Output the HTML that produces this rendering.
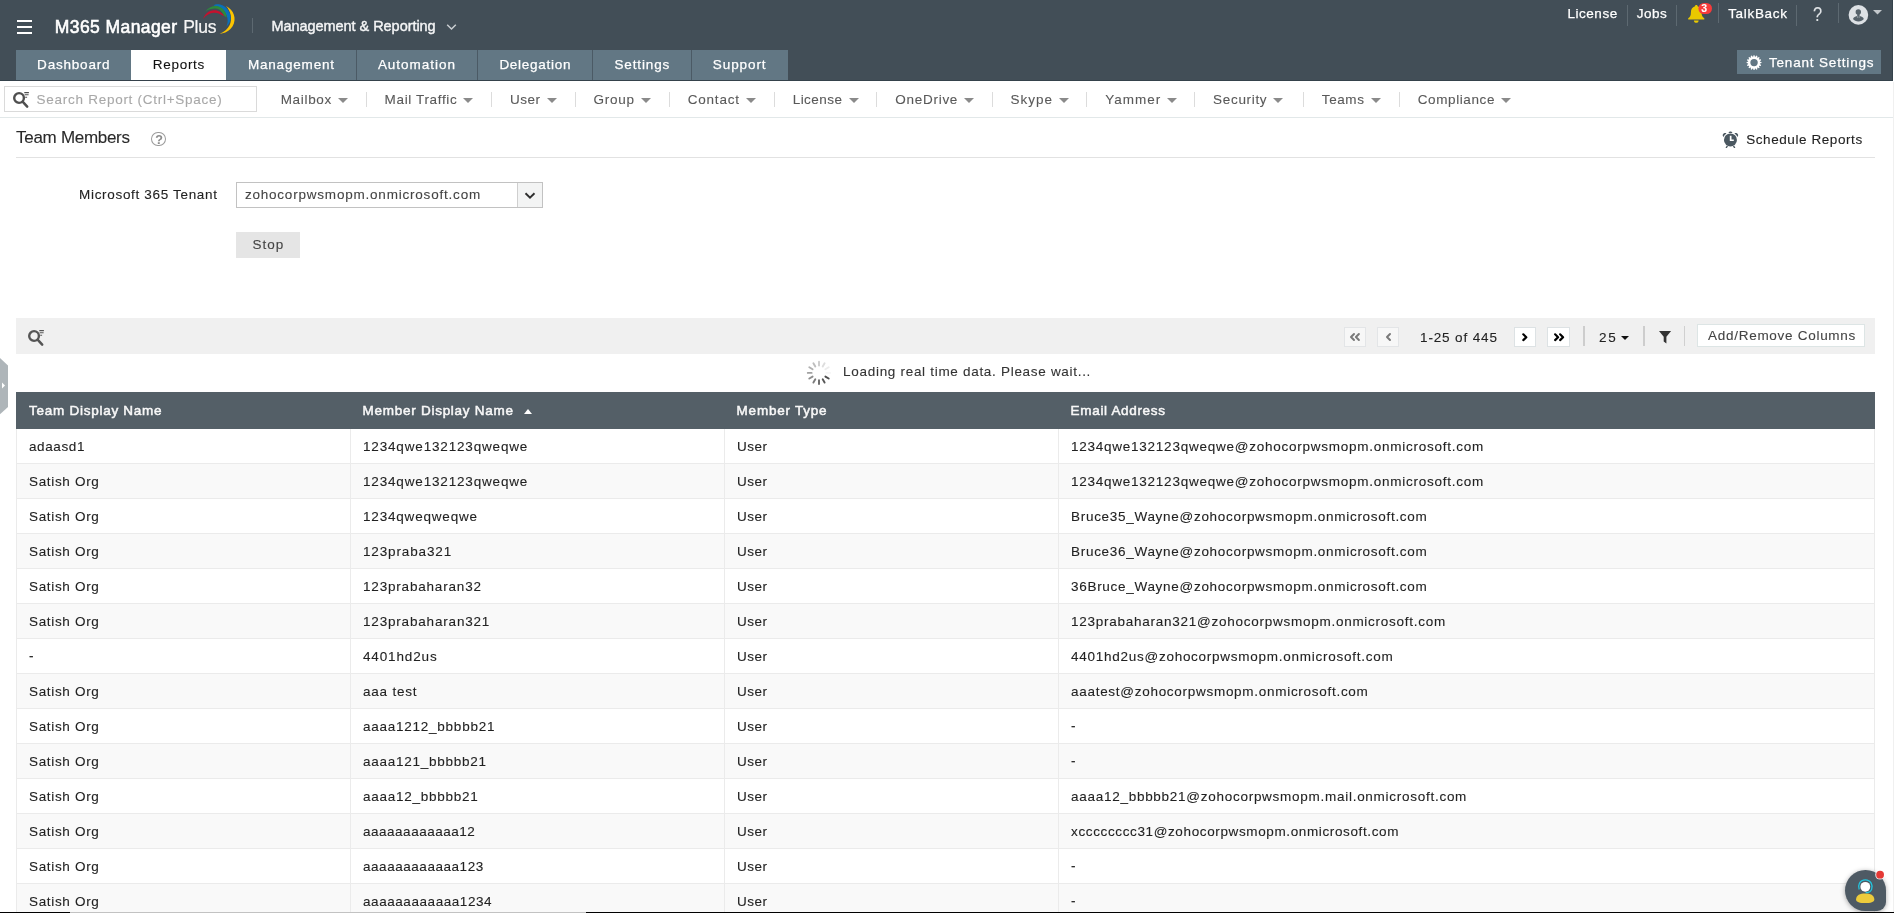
<!DOCTYPE html>
<html lang="en"><head><meta charset="utf-8"><title>M365 Manager Plus - Team Members</title>
<style>
*{box-sizing:border-box;margin:0;padding:0}
html,body{width:1894px;height:913px;overflow:hidden;background:#fff}
body{font-family:"Liberation Sans",sans-serif;font-size:13.5px;color:#222;-webkit-text-stroke-width:0.1px}
#app{position:absolute;left:0;top:0;width:1894px;height:913px;overflow:hidden;background:#fff;will-change:transform}
.t{position:absolute;white-space:nowrap;line-height:20px;height:20px}
.abs{position:absolute}
header{position:absolute;left:0;top:0;width:1893px;height:81px;background:#424e57;border-bottom:1px solid #35424b;border-right:1px solid #35424b}
.vsep{position:absolute;width:1px;background:#5d6971}
.tab{position:absolute;top:50px;height:30px;background:#627784}
.tab.sel{background:#fff}
.tdiv{position:absolute;top:50px;height:30px;width:1px;background:#4b5a65}
nav{position:absolute;left:0;top:81px;width:1893px;height:37px;background:#fff;border-bottom:1px solid #e2e8e9}
.msep{position:absolute;top:11px;width:1px;height:15px;background:#dcdcdc}
.caret{position:absolute;width:0;height:0;border-left:5px solid transparent;border-right:5px solid transparent;border-top:5px solid #8a8a8a}
table{border-collapse:separate;border-spacing:0;table-layout:fixed}
th{background:#545f67;color:#f8f8f8;height:37px;text-align:left;padding:0 0 0 13px;font-weight:400;-webkit-text-stroke:0.5px #f8f8f8;white-space:nowrap;vertical-align:top}
th span{display:inline-block;line-height:20px;margin-top:9px}
th+th{padding-left:12.6px}
td{height:35px;padding:0 0 0 12px;border-bottom:1px solid #ebebeb;border-left:1px solid #ebebeb;white-space:nowrap;vertical-align:top;color:#222}
td span{display:inline-block;line-height:20px;margin-top:8px}
tr.e td{background:#f9f9f9}
td:last-child{border-right:1px solid #ebebeb}
.pb{position:absolute;top:327px;height:20px;width:22px;border:1px solid #e3e5e7;background:#f7f7f7}
.pb.on{background:#fff;border-color:#dde2e4}
</style></head><body><div id="app">

<header>
<div class="abs" style="left:17px;top:20px;width:15px;height:2px;background:#fff"></div>
<div class="abs" style="left:17px;top:26px;width:15px;height:2px;background:#fff"></div>
<div class="abs" style="left:17px;top:32px;width:15px;height:2px;background:#fff"></div>
<span class="t" id="t0" style="left:54.80px;top:17.00px;font-size:17.5px;font-weight:400;color:#fff;letter-spacing:0.416px;-webkit-text-stroke:0.6px #fff">M365 Manager</span>
<span class="t" id="t1" style="left:183.20px;top:17.00px;font-size:17.5px;font-weight:400;color:#f6f6f6;letter-spacing:-0.282px;-webkit-text-stroke:0.2px #f6f6f6">Plus</span>
<svg class="abs" style="left:200px;top:0" width="40" height="40" viewBox="200 0 40 40">
<path d="M226 5.9C233.8 9.6 237 18.8 232.6 26.2C229.8 30.8 225 33.2 219.6 33.8C224.2 32 227.8 29 229.7 25C232.4 19 231 11.2 226 5.9Z" fill="#fcc400"/>
<path d="M213.3 5.5C215 4.3 217.6 4 220 4.6C226.6 6.3 231 12.4 230.6 18.6C230.4 21.6 228.8 24.6 226.3 26.8C227.6 24 228 21 227.4 18C226.3 12 220.8 6.2 213.3 5.5Z" fill="#0a71bb"/>
<path d="M205 11.7C208 8 212 6 216.2 6.1C221.6 6.3 226.2 10.8 226.9 17.5C225.6 17 224.6 16.4 223.7 15.6C222.4 11.4 219.2 8.7 215.4 8.6C211.6 8.5 208 9.8 205 11.7Z" fill="#2d8a3c"/>
<path d="M203.2 18.9C204.4 14.2 208.6 10.4 214 10.2C218.2 10 222 12.4 224.3 15.8C223.6 15.8 222.8 15.6 222 15.2C219.8 13.4 217 12.5 214 12.7C209.6 13 205.6 15.4 203.2 18.9Z" fill="#c5112e"/>
</svg>
<div class="vsep" style="left:252px;top:18px;height:15px"></div>
<span class="t" id="t2" style="left:271.40px;top:16.00px;font-size:14.5px;font-weight:400;color:#f4f5f6;letter-spacing:-0.045px;-webkit-text-stroke:0.4px #f4f5f6">Management &amp; Reporting</span>
<svg class="abs" style="left:445px;top:22px" width="13" height="10" viewBox="0 0 13 10"><path d="M2.2 2.8L6.5 7L10.8 2.8" fill="none" stroke="#c9ced2" stroke-width="1.5"/></svg>
<span class="t" id="t3" style="left:1567.50px;top:4.00px;font-size:13.5px;font-weight:400;color:#fff;letter-spacing:0.526px;-webkit-text-stroke:0.25px #fff">License</span>
<div class="vsep" style="left:1627px;top:5px;height:21px"></div>
<span class="t" id="t4" style="left:1636.70px;top:4.00px;font-size:13.5px;font-weight:400;color:#fff;letter-spacing:0.556px;-webkit-text-stroke:0.25px #fff">Jobs</span>
<div class="vsep" style="left:1676px;top:5px;height:21px"></div>
<svg class="abs" style="left:1686px;top:2px" width="30" height="24" viewBox="1686 2 30 24">
<path d="M1696.3 4.9C1697.3 4.9 1697.6 5.6 1697.6 6.2C1700.4 7 1701.6 9.4 1701.6 12.4C1701.6 15.2 1702.4 17 1704.3 18.3L1704.3 19.5L1688.2 19.5L1688.2 18.3C1690.2 17 1690.9 15.2 1690.9 12.4C1690.9 9.4 1692.2 7 1695 6.2C1695 5.6 1695.3 4.9 1696.3 4.9Z" fill="#e9c900"/>
<path d="M1693.9 20.4L1698.6 20.4C1698.6 21.8 1697.6 22.7 1696.25 22.7C1694.9 22.7 1693.9 21.8 1693.9 20.4Z" fill="#e9c900"/>
<rect x="1698.4" y="3" width="13.6" height="11" rx="5.5" fill="#f73b3b"/>
</svg>
<span class="t" id="t5" style="left:1701.30px;top:-2.00px;font-size:10.5px;font-weight:700;color:#fff;letter-spacing:1.456px;">3</span>
<div class="vsep" style="left:1718px;top:3px;height:20px"></div>
<span class="t" id="t6" style="left:1728.20px;top:4.00px;font-size:13.5px;font-weight:400;color:#fff;letter-spacing:0.681px;-webkit-text-stroke:0.25px #fff">TalkBack</span>
<div class="vsep" style="left:1796px;top:5px;height:21px"></div>
<span class="t" id="t7" style="left:1812.80px;top:4.00px;font-size:20px;font-weight:400;color:#dfe3e6;letter-spacing:-1.625px;transform:scaleX(.82);transform-origin:0 0">?</span>
<div class="vsep" style="left:1838px;top:3px;height:20px"></div>
<svg class="abs" style="left:1847px;top:3px" width="38" height="24" viewBox="1847 3 38 24">
<circle cx="1858.4" cy="14.9" r="9.8" fill="#dde1e5"/>
<circle cx="1858.3" cy="11.9" r="2.7" fill="#56626b"/>
<path d="M1853 19C1853.6 17.4 1855.2 16.5 1857 16.1H1859.8C1861.6 16.5 1863.2 17.4 1863.8 19C1862.7 20.6 1860.7 21.5 1858.4 21.5C1856.1 21.5 1854.1 20.6 1853 19Z" fill="#56626b"/><path d="M1857.6 15.8V17.7M1859.2 15.8V17.7" stroke="#dde1e5" stroke-width=".55"/><rect x="1857.2" y="13.8" width="2.4" height="2.6" fill="#56626b"/>
<path d="M1873 10L1882 10L1877.5 14.5Z" fill="#c3c8cc"/>
</svg>
<div class="abs" style="left:1737px;top:50px;width:144px;height:24px;background:#627784"></div>
<svg class="abs" style="left:1744px;top:52px" width="20" height="20" viewBox="1744 52 20 20"><path d="M1759.98 61.66L1761.48 62.10L1761.48 63.10L1759.98 63.54L1759.88 64.00L1761.11 64.99L1760.73 65.90L1759.17 65.73L1758.90 66.13L1759.66 67.50L1758.95 68.21L1757.58 67.45L1757.18 67.72L1757.35 69.28L1756.44 69.66L1755.45 68.43L1754.99 68.53L1754.55 70.03L1753.55 70.03L1753.11 68.53L1752.65 68.43L1751.66 69.66L1750.75 69.28L1750.92 67.72L1750.52 67.45L1749.15 68.21L1748.44 67.50L1749.20 66.13L1748.93 65.73L1747.37 65.90L1746.99 64.99L1748.22 64.00L1748.12 63.54L1746.62 63.10L1746.62 62.10L1748.12 61.66L1748.22 61.20L1746.99 60.21L1747.37 59.30L1748.93 59.47L1749.20 59.07L1748.44 57.70L1749.15 56.99L1750.52 57.75L1750.92 57.48L1750.75 55.92L1751.66 55.54L1752.65 56.77L1753.11 56.67L1753.55 55.17L1754.55 55.17L1754.99 56.67L1755.45 56.77L1756.44 55.54L1757.35 55.92L1757.18 57.48L1757.58 57.75L1758.95 56.99L1759.66 57.70L1758.90 59.07L1759.17 59.47L1760.73 59.30L1761.11 60.21L1759.88 61.20ZM1757.75 62.60A3.7 3.7 0 1 0 1750.35 62.60A3.7 3.7 0 1 0 1757.75 62.60Z" fill="#fff" fill-rule="evenodd"/></svg>
<span class="t" id="t8" style="left:1768.90px;top:53.00px;font-size:13.5px;font-weight:400;color:#fff;letter-spacing:0.830px;-webkit-text-stroke:0.25px #fff">Tenant Settings</span>
<div class="tab" style="left:16px;width:115px"></div>
<span class="t" id="t9" style="left:37.10px;top:55.00px;font-size:13.5px;font-weight:400;color:#fff;letter-spacing:0.794px;-webkit-text-stroke:0.25px #fff">Dashboard</span>
<div class="tab sel" style="left:131px;width:95px"></div>
<span class="t" id="t10" style="left:152.80px;top:55.00px;font-size:13.5px;font-weight:400;color:#111;letter-spacing:0.703px;">Reports</span>
<div class="tab" style="left:226px;width:130px"></div>
<span class="t" id="t11" style="left:247.90px;top:55.00px;font-size:13.5px;font-weight:400;color:#fff;letter-spacing:0.821px;-webkit-text-stroke:0.25px #fff">Management</span>
<div class="tab" style="left:357px;width:120px"></div>
<span class="t" id="t12" style="left:377.90px;top:55.00px;font-size:13.5px;font-weight:400;color:#fff;letter-spacing:0.978px;-webkit-text-stroke:0.25px #fff">Automation</span>
<div class="tab" style="left:478px;width:114px"></div>
<span class="t" id="t13" style="left:499.40px;top:55.00px;font-size:13.5px;font-weight:400;color:#fff;letter-spacing:0.717px;-webkit-text-stroke:0.25px #fff">Delegation</span>
<div class="tab" style="left:593px;width:98px"></div>
<span class="t" id="t14" style="left:614.40px;top:55.00px;font-size:13.5px;font-weight:400;color:#fff;letter-spacing:0.874px;-webkit-text-stroke:0.25px #fff">Settings</span>
<div class="tab" style="left:692px;width:96px"></div>
<span class="t" id="t15" style="left:712.80px;top:55.00px;font-size:13.5px;font-weight:400;color:#fff;letter-spacing:0.917px;-webkit-text-stroke:0.25px #fff">Support</span>
<div class="tdiv" style="left:356px"></div>
<div class="tdiv" style="left:477px"></div>
<div class="tdiv" style="left:592px"></div>
<div class="tdiv" style="left:691px"></div>
</header>
<nav>
<div class="abs" style="left:4px;top:5px;width:252.5px;height:26px;border:1px solid #dadada;background:#fff"></div>
<svg class="abs" style="left:11.55px;top:9.700000000000003px" width="20" height="20" viewBox="0 0 20 20">
<circle cx="7.05" cy="7.0" r="4.85" fill="none" stroke="#4f4f4f" stroke-width="2.4"/>
<path d="M10.6 10.6L15.2 15.6" stroke="#4f4f4f" stroke-width="2.5" stroke-linecap="round"/>
<path d="M12.3 1.6H16.9M12.6 3.7H16.6M13.2 6.3H15.1" stroke="#4f4f4f" stroke-width="1.05"/>
</svg>
<span class="t" id="t16" style="left:36.60px;top:9.00px;font-size:13.5px;font-weight:400;color:#a8a8a8;letter-spacing:0.726px;">Search Report (Ctrl+Space)</span>
<span class="t" id="t17" style="left:280.70px;top:9.00px;font-size:13.5px;font-weight:400;color:#595959;letter-spacing:0.678px;">Mailbox</span>
<div class="caret" style="left:338.0px;top:16.6px"></div>
<span class="t" id="t18" style="left:384.60px;top:9.00px;font-size:13.5px;font-weight:400;color:#595959;letter-spacing:0.644px;">Mail Traffic</span>
<div class="caret" style="left:463.4px;top:16.6px"></div>
<span class="t" id="t19" style="left:509.90px;top:9.00px;font-size:13.5px;font-weight:400;color:#595959;letter-spacing:0.495px;">User</span>
<div class="caret" style="left:546.6px;top:16.6px"></div>
<span class="t" id="t20" style="left:593.60px;top:9.00px;font-size:13.5px;font-weight:400;color:#595959;letter-spacing:0.717px;">Group</span>
<div class="caret" style="left:640.7px;top:16.6px"></div>
<span class="t" id="t21" style="left:687.70px;top:9.00px;font-size:13.5px;font-weight:400;color:#595959;letter-spacing:0.795px;">Contact</span>
<div class="caret" style="left:745.7px;top:16.6px"></div>
<span class="t" id="t22" style="left:792.70px;top:9.00px;font-size:13.5px;font-weight:400;color:#595959;letter-spacing:0.459px;">License</span>
<div class="caret" style="left:848.7px;top:16.6px"></div>
<span class="t" id="t23" style="left:895.20px;top:9.00px;font-size:13.5px;font-weight:400;color:#595959;letter-spacing:0.738px;">OneDrive</span>
<div class="caret" style="left:964.1px;top:16.6px"></div>
<span class="t" id="t24" style="left:1010.60px;top:9.00px;font-size:13.5px;font-weight:400;color:#595959;letter-spacing:0.967px;">Skype</span>
<div class="caret" style="left:1058.7px;top:16.6px"></div>
<span class="t" id="t25" style="left:1105.20px;top:9.00px;font-size:13.5px;font-weight:400;color:#595959;letter-spacing:0.997px;">Yammer</span>
<div class="caret" style="left:1166.9px;top:16.6px"></div>
<span class="t" id="t26" style="left:1213.10px;top:9.00px;font-size:13.5px;font-weight:400;color:#595959;letter-spacing:0.674px;">Security</span>
<div class="caret" style="left:1273.3px;top:16.6px"></div>
<span class="t" id="t27" style="left:1321.80px;top:9.00px;font-size:13.5px;font-weight:400;color:#595959;letter-spacing:0.584px;">Teams</span>
<div class="caret" style="left:1370.6px;top:16.6px"></div>
<span class="t" id="t28" style="left:1417.70px;top:9.00px;font-size:13.5px;font-weight:400;color:#595959;letter-spacing:0.611px;">Compliance</span>
<div class="caret" style="left:1501.2px;top:16.6px"></div>
<div class="msep" style="left:366px"></div>
<div class="msep" style="left:491px"></div>
<div class="msep" style="left:575px"></div>
<div class="msep" style="left:669px"></div>
<div class="msep" style="left:774px"></div>
<div class="msep" style="left:876px"></div>
<div class="msep" style="left:992px"></div>
<div class="msep" style="left:1086px"></div>
<div class="msep" style="left:1194px"></div>
<div class="msep" style="left:1303px"></div>
<div class="msep" style="left:1399px"></div>
</nav>
<main>
<span class="t" id="t29" style="left:16.10px;top:128.00px;font-size:17px;font-weight:400;color:#2a2a2a;letter-spacing:-0.295px;">Team Members</span>
<div class="abs" style="left:151.3px;top:131.6px;width:14.4px;height:14.6px;border:1.1px solid #9a9a9a;border-radius:50%"></div>
<span class="t" id="t30" style="left:155.20px;top:130.00px;font-size:12.5px;font-weight:700;color:#8c8c8c;letter-spacing:-0.641px;">?</span>
<svg class="abs" style="left:1720px;top:129px" width="21" height="21" viewBox="1720 129 21 21">
<circle cx="1730.45" cy="139.95" r="6.5" fill="#4b5861"/>
<path d="M1723.45 136.98A7.6 7.6 0 0 1 1726.42 133.5C1724.6 132.2 1721.2 134.4 1723.45 136.98Z" fill="#4b5861"/>
<path d="M1737.45 136.98A7.6 7.6 0 0 0 1734.48 133.5C1736.3 132.2 1739.7 134.4 1737.45 136.98Z" fill="#4b5861"/>
<path d="M1728.5 133.1C1728.6 130.8 1732.3 130.8 1732.4 133.1C1731.1 132.8 1729.8 132.8 1728.5 133.1Z" fill="#4b5861"/>
<path d="M1726.7 145.5L1725.5 147.9L1726.9 148.1L1728 146.3ZM1734.2 145.5L1735.4 147.9L1734 148.1L1732.9 146.3Z" fill="#4b5861"/>
<path d="M1729.8 135.8H1731.5V139.5H1733.8V141H1729.8Z" fill="#fff"/>
</svg>
<span class="t" id="t31" style="left:1746.20px;top:130.00px;font-size:13.5px;font-weight:400;color:#222;letter-spacing:0.578px;">Schedule Reports</span>
<div class="abs" style="left:16px;top:157px;width:1859px;height:1px;background:#e2e2e2"></div>
<span class="t" id="t32" style="left:79.10px;top:185.00px;font-size:13.5px;font-weight:400;color:#222;letter-spacing:0.675px;">Microsoft 365 Tenant</span>
<div class="abs" style="left:236px;top:182px;width:307px;height:26px;border:1px solid #c2c2c2;background:#fff"></div>
<div class="abs" style="left:517px;top:183px;width:25px;height:24px;border-left:1px solid #cfcfcf;background:#f3f4f4"></div>
<svg class="abs" style="left:523px;top:190px" width="14" height="11" viewBox="0 0 14 11"><path d="M2.5 3.2L7 7.6L11.5 3.2" fill="none" stroke="#2e2e2e" stroke-width="1.9"/></svg>
<span class="t" id="t33" style="left:244.90px;top:185.00px;font-size:13.5px;font-weight:400;color:#444;letter-spacing:0.792px;">zohocorpwsmopm.onmicrosoft.com</span>
<div class="abs" style="left:236px;top:232px;width:64px;height:26px;background:#e5e5e5"></div>
<span class="t" id="t34" style="left:252.40px;top:235.00px;font-size:13.5px;font-weight:400;color:#444;letter-spacing:1.006px;">Stop</span>
<div class="abs" style="left:16px;top:318px;width:1859px;height:36px;background:#f0f0f0"></div>
<svg class="abs" style="left:26.85px;top:328.7px" width="20" height="20" viewBox="0 0 20 20">
<circle cx="7.05" cy="7.0" r="4.85" fill="none" stroke="#555" stroke-width="2.4"/>
<path d="M10.6 10.6L15.2 15.6" stroke="#555" stroke-width="2.5" stroke-linecap="round"/>
<path d="M12.3 1.6H16.9M12.6 3.7H16.6M13.2 6.3H15.1" stroke="#555" stroke-width="1.05"/>
</svg>
<div class="pb" style="left:1344px;width:22px"></div>
<div class="pb" style="left:1377px;width:22px"></div>
<div class="pb on" style="left:1514px;width:22px"></div>
<div class="pb on" style="left:1547px;width:23px"></div>
<svg class="abs" style="left:1344px;top:327px" width="230" height="20" viewBox="1344 327 230 20" fill="none" stroke-linecap="round" stroke-linejoin="round">
<path d="M1354 334L1351 337L1354 340M1358.9 334L1355.9 337L1358.9 340" stroke="#7a7a7a" stroke-width="2"/>
<path d="M1390 334L1387 337L1390 340" stroke="#7a7a7a" stroke-width="2"/>
<path d="M1523.3 334.3L1526.3 337.2L1523.3 340.1" stroke="#000" stroke-width="2.2"/>
<path d="M1555.1 334.3L1558.1 337.2L1555.1 340.1M1560.1 334.3L1563.1 337.2L1560.1 340.1" stroke="#000" stroke-width="2.2"/>
</svg>
<span class="t" id="t35" style="left:1420.00px;top:328.00px;font-size:13.5px;font-weight:400;color:#222;letter-spacing:0.869px;">1-25 of 445</span>
<div class="abs" style="left:1583px;top:326px;width:2px;height:20px;background:#cdcdcd"></div>
<span class="t" id="t36" style="left:1598.90px;top:328.00px;font-size:13.5px;font-weight:400;color:#222;letter-spacing:1.769px;">25</span>
<div class="caret" style="left:1620.6px;top:335.6px;border-top-color:#111;border-left-width:4.6px;border-right-width:4.6px;border-top-width:4.8px"></div>
<div class="abs" style="left:1643px;top:326px;width:2px;height:20px;background:#cdcdcd"></div>
<svg class="abs" style="left:1657px;top:329px" width="16" height="16" viewBox="1657 329 16 16"><path d="M1659 331H1671.1L1666.4 336.8V343.4L1663.7 341.4V336.8Z" fill="#333"/></svg>
<div class="abs" style="left:1684px;top:326px;width:1px;height:20px;background:#d0d0d0"></div>
<div class="abs" style="left:1697px;top:324px;width:167.5px;height:23px;border:1px solid #dde5e5;background:#fff"></div>
<span class="t" id="t37" style="left:1708.10px;top:326.00px;font-size:13.5px;font-weight:400;color:#444;letter-spacing:0.714px;">Add/Remove Columns</span>
<svg class="abs" style="left:804px;top:358px" width="30" height="30" viewBox="804 358 30 30"><path d="M825.41 376.60L828.70 378.50" stroke="#4d4d4d" stroke-width="1.9" stroke-linecap="round"/><path d="M822.70 379.31L824.60 382.60" stroke="#575757" stroke-width="1.9" stroke-linecap="round"/><path d="M819.00 380.30L819.00 384.10" stroke="#686868" stroke-width="1.9" stroke-linecap="round"/><path d="M815.30 379.31L813.40 382.60" stroke="#7c7c7c" stroke-width="1.9" stroke-linecap="round"/><path d="M812.59 376.60L809.30 378.50" stroke="#8e8e8e" stroke-width="1.9" stroke-linecap="round"/><path d="M811.60 372.90L807.80 372.90" stroke="#a0a0a0" stroke-width="1.9" stroke-linecap="round"/><path d="M812.59 369.20L809.30 367.30" stroke="#b0b0b0" stroke-width="1.9" stroke-linecap="round"/><path d="M815.30 366.49L813.40 363.20" stroke="#bebebe" stroke-width="1.9" stroke-linecap="round"/><path d="M819.00 365.50L819.00 361.70" stroke="#cccccc" stroke-width="1.9" stroke-linecap="round"/><path d="M822.70 366.49L824.60 363.20" stroke="#dddddd" stroke-width="1.9" stroke-linecap="round"/><path d="M825.41 369.20L828.70 367.30" stroke="#ececec" stroke-width="1.9" stroke-linecap="round"/><path d="M826.40 372.90L830.20 372.90" stroke="#f6f6f6" stroke-width="1.9" stroke-linecap="round"/></svg>
<span class="t" id="t38" style="left:843.10px;top:362.00px;font-size:13.5px;font-weight:400;color:#333;letter-spacing:0.700px;">Loading real time data. Please wait...</span>
<table class="abs" style="left:16px;top:392px;width:1859px">
<colgroup><col style="width:334px"><col style="width:374px"><col style="width:334px"><col style="width:817px"></colgroup>
<thead><tr>
<th><span id="t39" style="font-size:13.5px;font-weight:400;letter-spacing:0.738px;">Team Display Name</span></th>
<th><span id="t40" style="font-size:13.5px;font-weight:400;letter-spacing:0.728px;">Member Display Name</span><i style="display:inline-block;width:0;height:0;border-left:4.8px solid transparent;border-right:4.8px solid transparent;border-bottom:5px solid #fff;margin-left:10.3px;vertical-align:top;margin-top:17px"></i></th>
<th><span id="t41" style="font-size:13.5px;font-weight:400;letter-spacing:0.770px;">Member Type</span></th>
<th><span id="t42" style="font-size:13.5px;font-weight:400;letter-spacing:0.675px;">Email Address</span></th>
</tr></thead><tbody>
<tr><td><span id="t43" style="font-size:13.5px;font-weight:400;letter-spacing:0.605px;">adaasd1</span></td><td><span id="t44" style="font-size:13.5px;font-weight:400;letter-spacing:0.833px;">1234qwe132123qweqwe</span></td><td><span id="t45" style="font-size:13.5px;font-weight:400;letter-spacing:0.496px;">User</span></td><td><span id="t46" style="font-size:13.5px;font-weight:400;letter-spacing:0.754px;">1234qwe132123qweqwe@zohocorpwsmopm.onmicrosoft.com</span></td></tr>
<tr class=e><td><span id="t47" style="font-size:13.5px;font-weight:400;letter-spacing:0.670px;">Satish Org</span></td><td><span id="t48" style="font-size:13.5px;font-weight:400;letter-spacing:0.833px;">1234qwe132123qweqwe</span></td><td><span id="t49" style="font-size:13.5px;font-weight:400;letter-spacing:0.496px;">User</span></td><td><span id="t50" style="font-size:13.5px;font-weight:400;letter-spacing:0.754px;">1234qwe132123qweqwe@zohocorpwsmopm.onmicrosoft.com</span></td></tr>
<tr><td><span id="t51" style="font-size:13.5px;font-weight:400;letter-spacing:0.670px;">Satish Org</span></td><td><span id="t52" style="font-size:13.5px;font-weight:400;letter-spacing:0.812px;">1234qweqweqwe</span></td><td><span id="t53" style="font-size:13.5px;font-weight:400;letter-spacing:0.496px;">User</span></td><td><span id="t54" style="font-size:13.5px;font-weight:400;letter-spacing:0.708px;">Bruce35_Wayne@zohocorpwsmopm.onmicrosoft.com</span></td></tr>
<tr class=e><td><span id="t55" style="font-size:13.5px;font-weight:400;letter-spacing:0.670px;">Satish Org</span></td><td><span id="t56" style="font-size:13.5px;font-weight:400;letter-spacing:0.862px;">123praba321</span></td><td><span id="t57" style="font-size:13.5px;font-weight:400;letter-spacing:0.496px;">User</span></td><td><span id="t58" style="font-size:13.5px;font-weight:400;letter-spacing:0.708px;">Bruce36_Wayne@zohocorpwsmopm.onmicrosoft.com</span></td></tr>
<tr><td><span id="t59" style="font-size:13.5px;font-weight:400;letter-spacing:0.670px;">Satish Org</span></td><td><span id="t60" style="font-size:13.5px;font-weight:400;letter-spacing:0.812px;">123prabaharan32</span></td><td><span id="t61" style="font-size:13.5px;font-weight:400;letter-spacing:0.496px;">User</span></td><td><span id="t62" style="font-size:13.5px;font-weight:400;letter-spacing:0.708px;">36Bruce_Wayne@zohocorpwsmopm.onmicrosoft.com</span></td></tr>
<tr class=e><td><span id="t63" style="font-size:13.5px;font-weight:400;letter-spacing:0.670px;">Satish Org</span></td><td><span id="t64" style="font-size:13.5px;font-weight:400;letter-spacing:0.817px;">123prabaharan321</span></td><td><span id="t65" style="font-size:13.5px;font-weight:400;letter-spacing:0.496px;">User</span></td><td><span id="t66" style="font-size:13.5px;font-weight:400;letter-spacing:0.743px;">123prabaharan321@zohocorpwsmopm.onmicrosoft.com</span></td></tr>
<tr><td><span id="t67" style="font-size:13.5px;font-weight:400;letter-spacing:1.485px;position:relative;top:-1px;">-</span></td><td><span id="t68" style="font-size:13.5px;font-weight:400;letter-spacing:0.857px;">4401hd2us</span></td><td><span id="t69" style="font-size:13.5px;font-weight:400;letter-spacing:0.496px;">User</span></td><td><span id="t70" style="font-size:13.5px;font-weight:400;letter-spacing:0.738px;">4401hd2us@zohocorpwsmopm.onmicrosoft.com</span></td></tr>
<tr class=e><td><span id="t71" style="font-size:13.5px;font-weight:400;letter-spacing:0.670px;">Satish Org</span></td><td><span id="t72" style="font-size:13.5px;font-weight:400;letter-spacing:0.782px;">aaa test</span></td><td><span id="t73" style="font-size:13.5px;font-weight:400;letter-spacing:0.496px;">User</span></td><td><span id="t74" style="font-size:13.5px;font-weight:400;letter-spacing:0.717px;">aaatest@zohocorpwsmopm.onmicrosoft.com</span></td></tr>
<tr><td><span id="t75" style="font-size:13.5px;font-weight:400;letter-spacing:0.670px;">Satish Org</span></td><td><span id="t76" style="font-size:13.5px;font-weight:400;letter-spacing:0.753px;">aaaa1212_bbbbb21</span></td><td><span id="t77" style="font-size:13.5px;font-weight:400;letter-spacing:0.496px;">User</span></td><td><span id="t78" style="font-size:13.5px;font-weight:400;letter-spacing:1.485px;position:relative;top:-1px;">-</span></td></tr>
<tr class=e><td><span id="t79" style="font-size:13.5px;font-weight:400;letter-spacing:0.670px;">Satish Org</span></td><td><span id="t80" style="font-size:13.5px;font-weight:400;letter-spacing:0.745px;">aaaa121_bbbbb21</span></td><td><span id="t81" style="font-size:13.5px;font-weight:400;letter-spacing:0.496px;">User</span></td><td><span id="t82" style="font-size:13.5px;font-weight:400;letter-spacing:1.485px;position:relative;top:-1px;">-</span></td></tr>
<tr><td><span id="t83" style="font-size:13.5px;font-weight:400;letter-spacing:0.670px;">Satish Org</span></td><td><span id="t84" style="font-size:13.5px;font-weight:400;letter-spacing:0.734px;">aaaa12_bbbbb21</span></td><td><span id="t85" style="font-size:13.5px;font-weight:400;letter-spacing:0.496px;">User</span></td><td><span id="t86" style="font-size:13.5px;font-weight:400;letter-spacing:0.729px;">aaaa12_bbbbb21@zohocorpwsmopm.mail.onmicrosoft.com</span></td></tr>
<tr class=e><td><span id="t87" style="font-size:13.5px;font-weight:400;letter-spacing:0.670px;">Satish Org</span></td><td><span id="t88" style="font-size:13.5px;font-weight:400;letter-spacing:0.516px;">aaaaaaaaaaaa12</span></td><td><span id="t89" style="font-size:13.5px;font-weight:400;letter-spacing:0.496px;">User</span></td><td><span id="t90" style="font-size:13.5px;font-weight:400;letter-spacing:0.626px;">xcccccccc31@zohocorpwsmopm.onmicrosoft.com</span></td></tr>
<tr><td><span id="t91" style="font-size:13.5px;font-weight:400;letter-spacing:0.670px;">Satish Org</span></td><td><span id="t92" style="font-size:13.5px;font-weight:400;letter-spacing:0.542px;">aaaaaaaaaaaa123</span></td><td><span id="t93" style="font-size:13.5px;font-weight:400;letter-spacing:0.496px;">User</span></td><td><span id="t94" style="font-size:13.5px;font-weight:400;letter-spacing:1.485px;position:relative;top:-1px;">-</span></td></tr>
<tr class=e><td><span id="t95" style="font-size:13.5px;font-weight:400;letter-spacing:0.670px;">Satish Org</span></td><td><span id="t96" style="font-size:13.5px;font-weight:400;letter-spacing:0.564px;">aaaaaaaaaaaa1234</span></td><td><span id="t97" style="font-size:13.5px;font-weight:400;letter-spacing:0.496px;">User</span></td><td><span id="t98" style="font-size:13.5px;font-weight:400;letter-spacing:1.485px;position:relative;top:-1px;">-</span></td></tr>
</tbody></table>
</main>
<svg class="abs" style="left:0;top:357px" width="10" height="58" viewBox="0 357 10 58"><path d="M0 358L8 365.6V407L0 414.2Z" fill="#aeb5b9"/><path d="M2 382.6L5 385.6L2 388.6Z" fill="#fff"/></svg>
<div class="abs" style="left:1845.2px;top:869.8px;width:40.8px;height:41.1px;background:#4e5a64;border-radius:50% 50% 22% 50%;box-shadow:0 1px 5px rgba(0,0,0,.35)"></div>
<svg class="abs" style="left:1845px;top:866px" width="46" height="46" viewBox="1845 866 46 46">
<path d="M1856.1 899.4C1856.1 895 1860 893.4 1865.2 893.4C1870.4 893.4 1874.3 895 1874.3 899.4C1874.3 901.9 1870.6 903.1 1865.2 903.1C1859.8 903.1 1856.1 901.9 1856.1 899.4Z" fill="#eccb3c"/>
<circle cx="1865.3" cy="886.8" r="4.9" fill="#fff"/>
<path d="M1859.2 889.6C1857.4 885.6 1859.6 879.8 1865.3 879.8C1871 879.8 1873.2 885.6 1871.6 889.4C1870.8 891.8 1868.4 892.8 1865.6 892.6" fill="none" stroke="#22c6e0" stroke-width="1.3"/>
<circle cx="1880.1" cy="874.7" r="4.9" fill="#fff" fill-opacity=".85"/>
<circle cx="1880.1" cy="874.7" r="3.9" fill="#e53935"/>
</svg>
<div class="abs" style="left:1893px;top:82px;width:1px;height:831px;background:#f0f0f0"></div>
<div class="abs" style="left:0;top:912px;width:1894px;height:1px;background:#000"></div>
<div class="abs" style="left:70px;top:912px;width:516px;height:1px;background:#c2c2c2"></div>
</div></body></html>
